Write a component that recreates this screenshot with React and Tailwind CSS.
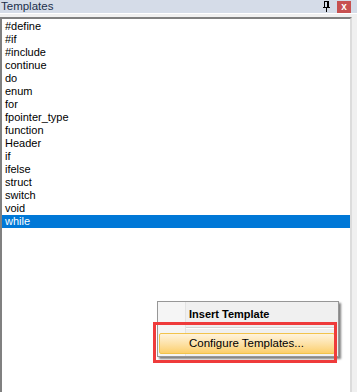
import React from "react";

const templates = [
  "#define",
  "#if",
  "#include",
  "continue",
  "do",
  "enum",
  "for",
  "fpointer_type",
  "function",
  "Header",
  "if",
  "ifelse",
  "struct",
  "switch",
  "void",
  "while",
];

const PinIcon = () => (
  <svg width="7" height="11" viewBox="0 0 7 11" className="block">
    <rect x="1" y="0" width="5" height="1" fill="#000" />
    <rect x="1" y="1" width="1" height="5" fill="#000" />
    <rect x="4" y="1" width="2" height="5" fill="#000" />
    <rect x="0" y="6" width="7" height="1" fill="#000" />
    <rect x="3" y="7" width="1" height="4" fill="#000" />
  </svg>
);

const App = () => {
  const selected = "while";

  return (
    <div className="relative w-[357px] h-[392px] overflow-hidden bg-[#f0f0f0] font-['Liberation_Sans',Arial,sans-serif]">
      {/* TITLE BAR */}
      <div className="flex items-center h-[13px] bg-[#d5dce8] pl-[1px] pr-[6px]">
        <span className="text-[11.5px] leading-[13px] text-[#1b2f4b]">
          Templates
        </span>
        <div className="ml-auto flex items-center gap-[7px]">
          <PinIcon />
          <div className="w-[14px] h-[12px] bg-[#c75050] flex items-center justify-center text-white text-[10px] font-bold leading-none">
            x
          </div>
        </div>
      </div>

      {/* LIST */}
      <div className="h-[379px] pt-[3px] pl-0 pr-[5px] border-t border-white">
        <div className="h-full bg-white border-t-2 border-l-2 border-t-[#808080] border-l-[#808080] border-r-2 border-r-[#dcdcdc] pt-[1px]">
          <ul className="flex flex-col">
            {templates.map((item) => (
              <li
                key={item}
                className={`h-[13px] leading-[13px] text-[11px] pl-[3px] ${
                  item === selected ? "bg-[#0078d7] text-white" : "text-black"
                }`}
              >
                {item}
              </li>
            ))}
          </ul>
        </div>
      </div>

      {/* CONTEXT MENU */}
      <div className="absolute left-[157px] top-[301px] w-[182px] h-[56px] bg-[#f0f0f0] border border-[#979797] shadow-[2px_2px_2px_rgba(0,0,0,0.5)] flex">
        <div className="w-[28px] bg-[#f5f5f5] border-r border-[#e3e3e3]" />
        <div className="flex-1 flex flex-col">
          <div className="h-[25px] flex items-center pl-[3px] text-[11px] font-bold text-black">
            Insert Template
          </div>
          <div className="h-px bg-[#d7d7d7] mr-[3px]" />
          <div className="h-px bg-white mr-[3px]" />
        </div>
        <div className="absolute left-[1px] top-[31px] w-[176px] h-[21px] rounded-[2px] border border-[#f2c34b] bg-gradient-to-b from-[#fff3dc] via-[#fde2a8] to-[#fccf6a] flex items-center pl-[29px] text-[11.5px] text-black">
          Configure Templates...
        </div>
      </div>

      {/* HIGHLIGHT BOX */}
      <div className="absolute left-[153px] top-[322px] w-[184px] h-[41px] border-[3px] border-[#ef3b3b]" />
    </div>
  );
};

export default App;
